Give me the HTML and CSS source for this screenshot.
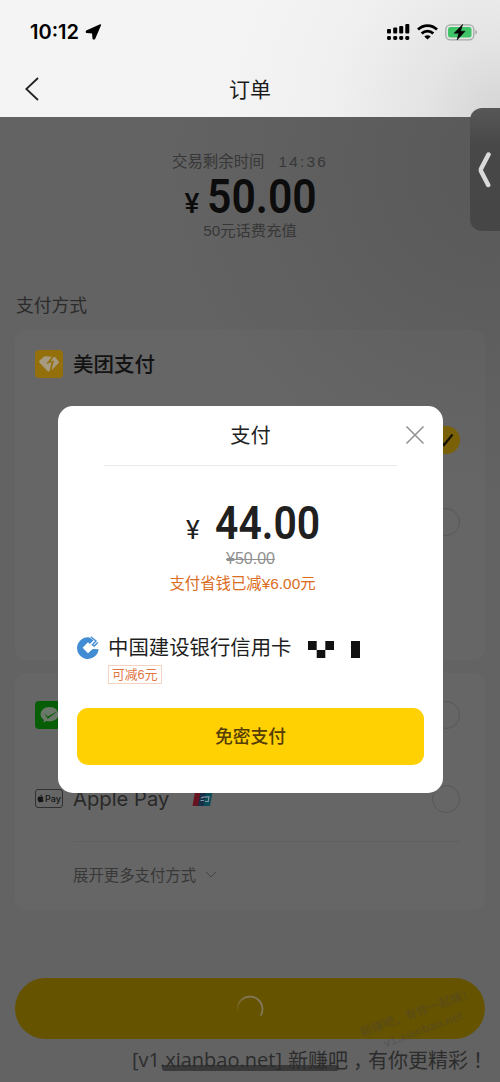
FILE: index.html
```html
<!DOCTYPE html>
<html lang="zh-CN">
<head>
<meta charset="utf-8">
<title>订单</title>
<link rel="stylesheet" href="styles.css">
</head>
<body>
<div class="screen">
  <header class="header">
    <div class="status">
      <span class="clock">10:12</span>
      <svg class="locate" width="17" height="16" viewBox="0 0 17 16"><path d="M15.400 1 9.500 14.700H8.200L7.700 8.800 1.500 8.300V7.200Z" fill="#000" stroke="#000" stroke-width="1.400" stroke-linejoin="round"/></svg>
      <svg class="signal" width="23" height="17" viewBox="0 0 23 17"><g fill="#000"><rect x="0" y="5" width="4" height="4.5" rx="1"/><rect x="6.2" y="3.6" width="4" height="5.9" rx="1"/><rect x="12.2" y="2" width="4" height="7.5" rx="1"/><rect x="18.3" y="0" width="4" height="9.5" rx="1"/><rect x="0" y="12" width="4" height="4" rx="1.4"/><rect x="6.2" y="12" width="4" height="4" rx="1.4"/><rect x="12.2" y="12" width="4" height="4" rx="1.4"/><rect x="18.3" y="12" width="4" height="4" rx="1.4"/></g></svg>
      <svg class="wifi" width="21" height="16" viewBox="0 0 21 16"><g fill="none" stroke="#000" stroke-width="2.8"><path d="M1 5.600C6.500.4 14.500.4 20 5.600"/><path d="M4.700 9.600c3.300-3.200 8.300-3.200 11.600 0"/></g><path d="M7.300 12.400c1.900-1.700 4.500-1.700 6.400 0l-3.200 3.200Z"/></svg>
      <svg class="battery" width="33" height="17" viewBox="0 0 33 17"><rect x=".8" y=".8" width="28" height="15" rx="4.500" fill="none" stroke="#a2aaa3" stroke-width="1.300"/><rect x="3" y="3" width="23.500" height="10.600" rx="2.500" fill="#3fc467"/><path d="M30.500 5.800c1.700.6 1.700 4.200 0 4.800Z" fill="#999"/><path d="M17.600.4 9 9.300h4.700l-1.600 6.600 8-8.700h-4.500Z" fill="#000" stroke="#000" stroke-width=".5"/></svg>
    </div>
    <div class="nav">
      <svg width="14" height="24" viewBox="0 0 14 24"><path d="M13 1 1.300 12 13 23" fill="none" stroke="#222" stroke-width="1.800"/></svg>
      <h1>订单</h1>
    </div>
  </header>

  <main class="page">
    <section class="summary">
      <p class="remain">交易剩余时间<span>14:36</span></p>
      <p class="total"><span class="yen">¥</span><span class="digits">50.00</span></p>
      <p class="goods">50元话费充值</p>
    </section>
    <h2 class="label">支付方式</h2>

    <section class="card card-main">
      <div class="brand">
        <svg width="28" height="28" viewBox="0 0 28 28"><rect width="28" height="28" rx="4" fill="#94700c"/><path d="M9.500 6.200 4.600 10.500q-1 1.200 0 2.200l7.800 8.200q1 1 2 .6l2.200-9.200-5.600 1.800 6-7.400Z" fill="#a69a80"/><path d="m18.800 6.700 1.200.4 3.600 4.100q.8 1 0 1.900l-7.200 7.400 2.600-10-3.600 1Z" fill="#a69a80"/></svg>
        <span>美团支付</span>
      </div>
      <div class="choice choice-on"><svg width="28" height="28" viewBox="0 0 28 28"><circle cx="14" cy="14" r="14" fill="#7a6007"/><path d="m8 14.500 4 4.500 8.500-10.500" fill="none" stroke="#171200" stroke-width="2.200"/></svg></div>
      <div class="choice"><i class="radio"></i></div>
    </section>

    <section class="card card-other">
      <div class="option wechat">
        <svg width="28" height="28" viewBox="0 0 28 28"><rect width="28" height="28" rx="4" fill="#075e07"/><path d="M14.500 6C9.500 6 5.600 9.200 5.600 13.200c0 2.400 1.300 4.400 3.400 5.700l-.5 2.500 3.100-1.500c6.500 1.500 12-2 12-6.700 0-4-4-7.200-9.100-7.200Z" fill="#6a7869"/><path d="m9.500 12.500 3.300 3 10.800-6-10.800 8.200Z" fill="#075e07"/></svg>
        <i class="radio"></i>
      </div>
      <div class="option apple">
        <span class="apple-box"><svg width="7" height="9" viewBox="0 0 12 14"><path d="M8.300.2C6.800.5 5.900 1.600 6 3.100 7.500 3 8.400 1.800 8.300.2ZM6.200 4.100C4.700 3.500 3.500 3.300 2.200 4.300c-2 1.600-1.300 5.300.1 7.400 1.400 2.100 2 2 3.600 1.400 1.500-.6 1.900.7 3.300 0 1.100-.6 1.800-2 2.300-3.200-2.100-1-2.200-3.800-.3-4.900C9.900 3.400 8 3.300 6.200 4.100Z" fill="#151515"/></svg>Pay</span>
        <span class="apple-name">Apple Pay</span>
        <svg class="union" width="21" height="14" viewBox="0 0 21 14"><path d="M3 0h7L7.500 14H.5Z" fill="#681420"/><path d="M8.500 0h7L13 14H6Z" fill="#172f49"/><path d="M14 0h6.500L18 14h-6.500Z" fill="#0a4b56"/><path d="M9 6c2.500-1.500 5.500-1 8-1.200l-.8 4.700H13m-4.500-1H12" stroke="#8195a2" stroke-width="1.200" fill="none"/></svg>
        <i class="radio"></i>
      </div>
      <div class="more">展开更多支付方式<svg width="12" height="7" viewBox="0 0 12 7"><path d="m1 1 5 5 5-5" fill="none" stroke="#444" stroke-width="1"/></svg></div>
    </section>

    <div class="submit"><svg width="28" height="28" viewBox="0 0 28 28"><defs><linearGradient id="spin" x1="0" y1="1" x2="1" y2="0"><stop offset=".1" stop-color="#837439" stop-opacity="0"/><stop offset=".6" stop-color="#81785a"/></linearGradient></defs><path d="M4.500 22.500A12.600 12.600 0 1 1 24.500 21" fill="none" stroke="url(#spin)" stroke-width="1.700"/></svg></div>
  </main>

  <div class="side-tab"><svg width="14" height="36" viewBox="0 0 14 36"><path d="M10.500 2.500 3.200 16.500q-.7 1.500 0 3l7 13.500" fill="none" stroke="#dadada" stroke-width="4.500" stroke-linecap="round" stroke-linejoin="round"/></svg></div>

  <div class="dialog" role="dialog">
    <div class="dialog-head">
      <h2>支付</h2>
      <svg class="close" width="20" height="20" viewBox="0 0 20 20"><path d="m1.500 1.500 17 17m0-17-17 17" stroke="#929292" stroke-width="1.600"/></svg>
    </div>
    <p class="price"><span class="yen">¥</span><span class="digits">44.00</span></p>
    <p class="origin">¥50.00</p>
    <p class="saved">支付省钱已减¥6.00元</p>
    <div class="bank">
      <svg class="ccb" width="22" height="23" viewBox="0 0 22 23"><path d="M12.500 1.500A10.800 10.800 0 1 0 21.600 13.200L15.700 13 11 17.300 5.600 11.700 11 6.300l1.800 1.600 3.700-3.600Z" fill="#428cd4"/><path d="m13.800.8 5.200 4.200-3.600 3.600 1.800 1.400 3.600-3.600" fill="none" stroke="#428cd4" stroke-width="1.400"/></svg>
      <div class="bank-info">
        <span class="bank-name">中国建设银行信用卡</span>
        <span class="tag">可减6元</span>
      </div>
      <svg class="mask" width="52" height="18" viewBox="0 0 52 18"><path d="M0 0h8.700v9H0ZM8.700 9h8.600v8H8.700ZM17.300 0H26v9h-8.700ZM43 0h9v17h-9Z" fill="#111"/></svg>
    </div>
    <div class="pay">免密支付</div>
  </div>

  <div class="home-bar"></div>
  <div class="stamp">新赚吧，有你一起赚！<br>v1.xianbao.net</div>
  <div class="caption"><span class="site">[v1.xianbao.net]</span><span>新赚吧<span class="comma">，</span>有你更精彩<span lang="zh-TW">！</span></span></div>
</div>
</body>
</html>
```

FILE: styles.css
```css
* { box-sizing: border-box; }
body { margin: 0; font-family: "Liberation Sans", "Noto Sans CJK SC", sans-serif; }
p, h1, h2 { margin: 0; font-weight: 400; }
svg { display: block; flex: none; }

.screen {
  position: relative;
  width: 500px;
  height: 1082px;
  overflow: hidden;
  background: #636363;
}

/* Status and navigation bars */
.header {
  height: 117px;
  background: radial-gradient(circle at 500px 117px, #d4d4d4 0, #e4e4e4 75px, #f0f0f0 170px, #f4f4f4 290px);
}
.status { display: flex; align-items: center; height: 64px; padding: 0 22px 0 30px; }
.clock { width: 55px; font: 600 20px/24px Inter, sans-serif; white-space: nowrap; }
.signal { margin-left: auto; }
.wifi { margin-left: 7px; }
.battery { margin-left: 7px; }
.nav { display: flex; align-items: center; height: 50px; padding: 0 25px; }
.nav h1 { flex: 1; padding: 1px 14px 0 0; text-align: center; font-size: 21px; line-height: 30px; color: #1a1a1a; }

/* Dimmed order page */
.page {
  height: 965px;
  padding: 34px 15px 0;
  background: radial-gradient(circle at 500px 50px, #595959 0, #5d5d5d 140px, #636363 330px);
}
.summary { display: flex; flex-direction: column; align-items: center; }
.remain { font-size: 15.400px; line-height: 22px; color: #373737; white-space: nowrap; }
.remain span { margin: 0 0 0 14px; letter-spacing: 2.2px; }
.total, .price { display: flex; align-items: baseline; font-family: Roboto, sans-serif; }
.yen, .digits { flex: none; }
.digits { display: block; font-weight: 600; font-size: 48px; line-height: 48px; transform-origin: 0 50%; }
.total { width: 131px; height: 48px; color: #0c0c0c; }
.total .yen { width: 22px; font-size: 28px; font-weight: 500; line-height: 30px; }
.total .digits { transform: scaleX(.89); }
.goods { font-size: 15.300px; line-height: 20px; color: #373737; }
.label { margin: 52px 0 11px 1px; font-size: 17.800px; line-height: 26px; color: #2b2b2b; }

.card { border-radius: 12px; background: rgba(255, 255, 255, .022); }
.card-main { height: 330px; padding: 20px 25px 0 20px; }
.brand { display: flex; align-items: center; gap: 10px; height: 28px; font-size: 20.500px; font-weight: 500; color: #131313; }
.brand span { padding-bottom: 3px; }
.choice { display: flex; justify-content: flex-end; margin-top: 54px; }
.choice-on { margin-top: 48px; }
.radio { width: 28px; height: 28px; border: 1px solid #585858; border-radius: 50%; }

.card-other { height: 237px; margin-top: 13px; padding: 28px 25px 0 20px; }
.option { display: flex; align-items: center; }
.option .radio { margin-left: auto; }
.apple { height: 85px; margin-top: 27px; }
.apple-box {
  display: flex; align-items: center; justify-content: center; gap: 1px;
  width: 28px; height: 19px; border: 1px solid #303030; border-radius: 3px;
  font: 500 9px/17px Inter, sans-serif; color: #151515;
}
.apple-name { width: 119px; margin-left: 10px; font: 400 20.200px/26px Inter, sans-serif; color: #292929; }
.more {
  display: flex; align-items: center; gap: 9px;
  height: 65px; margin-left: 38px; border-top: 1px solid #606060;
  font-size: 15.400px; color: #383838;
}
.submit {
  display: flex; align-items: center; justify-content: center;
  height: 61px; margin-top: 68px; border-radius: 31px; background: #665300;
}

/* Edge handle above the page */
.side-tab {
  position: absolute; top: 108px; right: 0;
  display: flex; align-items: center; justify-content: center;
  width: 30px; height: 123px; border-radius: 12px 0 0 12px;
  background: linear-gradient(#575757, #484848 30%, #464646);
}

/* Payment dialog */
.dialog {
  position: absolute; left: 58px; top: 406px;
  display: flex; flex-direction: column; align-items: center;
  width: 385px; height: 387px; padding: 0 19px; border-radius: 15px; background: #fff;
}
.dialog-head {
  display: flex; align-items: center; justify-content: flex-end;
  width: 293px; height: 60px; border-bottom: 1px solid #ebebeb;
}
.dialog-head h2 { flex: 1; text-align: center; font-size: 20.300px; line-height: 30px; color: #222; }
.close { margin: -2px -28px 0 8px; }
.price { width: 129px; height: 50px; margin-top: 33px; color: #202020; }
.price .yen { width: 29px; font-size: 26px; }
.price .digits { font-size: 46px; transform: scaleX(.89); }
.origin { margin-top: 1px; font-size: 16px; line-height: 18px; color: #909090; text-decoration: line-through; }
.saved { margin: 5px 16px 0 0; font-size: 15.400px; line-height: 22px; color: #db6d23; }
.bank { display: flex; width: 347px; height: 60px; margin-top: 39px; }
.ccb { margin: 2px 9px 0 0; }
.bank-info { display: flex; flex-direction: column; align-items: flex-start; width: 200px; }
.bank-name { font-size: 20.400px; line-height: 28px; color: #1f1f1f; white-space: nowrap; }
.tag { margin-top: 3px; padding: 0 3px; border: 1px solid #f6d2c0; font-size: 12.800px; line-height: 17px; color: #e17543; }
.mask { margin-top: 7px; }
.pay {
  width: 347px; height: 57px; margin-top: 14px; border-radius: 11px; background: #ffd002;
  text-align: center; font-size: 17.800px; font-weight: 500; line-height: 58px; color: #553d05;
}

/* Bottom overlays */
.home-bar { position: absolute; left: 162px; top: 1065px; width: 177px; height: 6px; border-radius: 3px; background: #3a3a3a; }
.stamp {
  position: absolute; left: 350px; top: 1003px; width: 140px;
  transform: rotate(-20deg); text-align: center;
  font-size: 12px; font-weight: 700; line-height: 18px; color: rgba(65, 65, 65, .3); white-space: nowrap;
}
.caption {
  position: absolute; left: 132px; top: 1045px;
  display: flex; gap: 6px;
  font: 400 20px/30px "Open Sans", "Noto Sans CJK SC", sans-serif; color: #2c2c2c; white-space: nowrap;
}
.caption [lang="zh-TW"] { font-family: "Noto Sans CJK TC", sans-serif; }
.comma { position: relative; left: 5px; }
```
